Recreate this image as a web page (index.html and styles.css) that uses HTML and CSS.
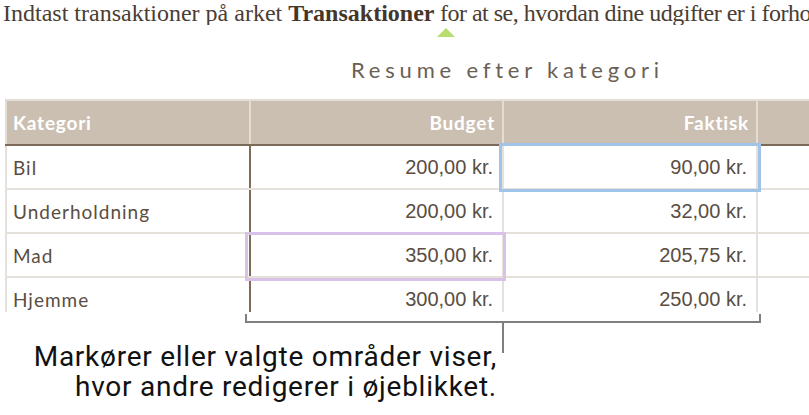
FILE: index.html
```html
<!DOCTYPE html>
<html lang="da">
<head>
<meta charset="utf-8">
<link rel="stylesheet" href="styles.css">
</head>
<body>
<div class="intro">Indtast transaktioner på arket <b>Transaktioner</b><span class="intro-rest"> for at se, hvordan dine udgifter er i forhold til budgettet.</span></div>
<div class="marker-row"><span class="marker"></span></div>
<h2 class="title">Resume efter kategori</h2>
<div class="table-wrap">
  <table class="sheet">
    <colgroup>
      <col class="c1"><col class="c2"><col class="c3"><col class="c4">
    </colgroup>
    <thead>
      <tr><th class="left">Kategori</th><th>Budget</th><th>Faktisk</th><th></th></tr>
    </thead>
    <tbody>
      <tr><td class="cat">Bil</td><td class="num">200,00 kr.</td><td class="num sel-blue">90,00 kr.</td><td></td></tr>
      <tr><td class="cat">Underholdning</td><td class="num">200,00 kr.</td><td class="num">32,00 kr.</td><td></td></tr>
      <tr><td class="cat">Mad</td><td class="num sel-purple">350,00 kr.</td><td class="num">205,75 kr.</td><td></td></tr>
      <tr><td class="cat">Hjemme</td><td class="num">300,00 kr.</td><td class="num">250,00 kr.</td><td></td></tr>
    </tbody>
  </table>
</div>
<div class="bracket"></div>
<div class="callout">
  <p class="callout-text">Markører eller valgte områder viser,<br>hvor andre redigerer i øjeblikket.</p>
  <span class="stem"></span>
</div>
</body>
</html>
```
FILE: styles.css
```css
html, body {
  margin: 0;
  padding: 0;
  background: #ffffff;
  width: 809px;
  height: 415px;
  overflow: hidden;
}

.intro {
  font-family: "Liberation Serif", serif;
  font-size: 24px;
  line-height: 24px;
  color: #4a3d33;
  white-space: nowrap;
  overflow: hidden;
  padding: 1px 0 0 3px;
  height: 24px;
}
.intro b {
  font-weight: 700;
  color: #46362a;
}
.intro-rest {
  letter-spacing: -0.5px;
}

.marker-row {
  height: 9px;
  padding-left: 437px;
  padding-top: 3px;
}
.marker {
  display: block;
  width: 0;
  height: 0;
  border-left: 9px solid transparent;
  border-right: 9px solid transparent;
  border-bottom: 9px solid #b8dc6e;
}

.title {
  margin: 0;
  padding-top: 20px;
  padding-left: 351px;
  height: 26px;
  font-family: "Lato", "Liberation Sans", sans-serif;
  font-weight: 400;
  font-size: 22px;
  line-height: 26px;
  letter-spacing: 4.8px;
  color: #6b5f55;
}

.table-wrap {
  margin-top: 16px;
  margin-left: 5px;
  height: 213px;
  overflow: hidden;
}

.sheet {
  border-collapse: collapse;
  table-layout: fixed;
  width: 820px;
}
.c1 { width: 244px; }
.c2 { width: 253px; }
.c3 { width: 254px; }
.c4 { width: 69px; }

.sheet th {
  background: #cbbfb2;
  color: #ffffff;
  font-family: "Lato", "Liberation Sans", sans-serif;
  font-weight: 700;
  font-size: 19px;
  letter-spacing: 0.8px;
  text-align: right;
  height: 45px;
  padding: 0 7px 0 8px;
  border-top: 2px solid #e4ddd5;
  border-right: 2px solid #e4ddd5;
  border-bottom: 2px solid #7b6a57;
  box-sizing: border-box;
}
.sheet th.left {
  text-align: left;
  padding-left: 6px;
  border-left: 2px solid #e4ddd5;
}

.sheet td {
  height: 44px;
  box-sizing: border-box;
  border-bottom: 2px solid #e5e0da;
  border-right: 2px solid #e5e0da;
  padding: 0 9px 0 8px;
  color: #5a4d42;
  font-size: 20px;
}
.sheet td.cat {
  font-family: "Lato", "Liberation Sans", sans-serif;
  font-weight: 400;
  font-size: 19px;
  letter-spacing: 1px;
  border-left: 2px solid #e5e0da;
  border-right: 2px solid #7d6c5a;
  padding-left: 6px;
}
.sheet td.num {
  font-family: "Liberation Sans", "Roboto", sans-serif;
  text-align: right;
}

.sel-blue, .sel-purple {
  position: relative;
}
.sel-blue::after, .sel-purple::after {
  content: "";
  position: absolute;
  box-sizing: border-box;
  pointer-events: none;
}
.sel-blue::after {
  left: -5px;
  right: -5px;
  top: -3px;
  bottom: -4px;
  border: 3px solid #9fc4e7;
}
.sel-purple::after {
  left: -6px;
  right: -4px;
  top: -2px;
  bottom: -5px;
  border: 3px solid #d8c2e8;
}

.bracket {
  margin-top: 2px;
  margin-left: 245px;
  width: 516px;
  height: 9px;
  box-sizing: border-box;
  border: 2px solid #7f7f7f;
  border-top: none;
}

.callout {
  display: flex;
  align-items: flex-start;
}
.callout-text {
  margin: 0;
  width: 497px;
  padding-top: 19px;
  text-align: right;
  font-family: "Roboto", "Liberation Sans", sans-serif;
  font-size: 28px;
  line-height: 30px;
  color: #111111;
  letter-spacing: 0.75px;
}
.stem {
  display: block;
  margin-left: 5px;
  width: 2px;
  height: 30px;
  background: #7f7f7f;
}
```
